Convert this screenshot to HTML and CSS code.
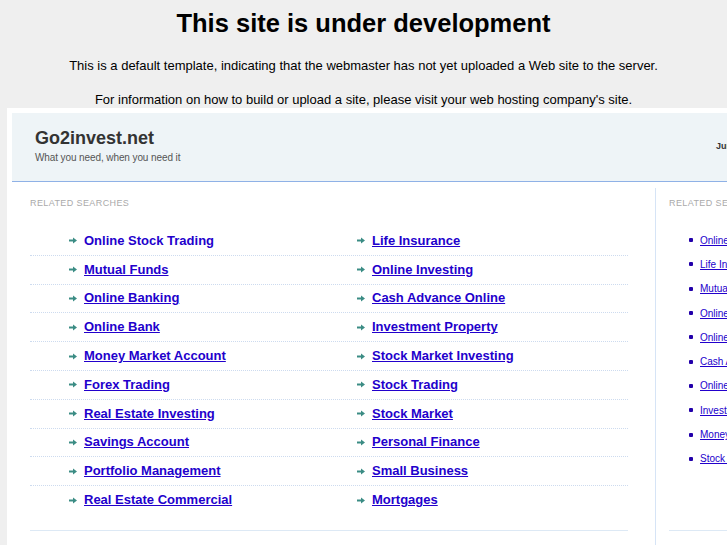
FILE: index.html
```html
<!DOCTYPE html>
<html>
<head>
<meta charset="utf-8">
<title>This site is under development</title>
<link rel="stylesheet" href="styles.css">
</head>
<body>
<h1 class="title">This site is under development</h1>
<p class="intro">This is a default template, indicating that the webmaster has not yet uploaded a Web site to the server.</p>
<p class="intro intro-second">For information on how to build or upload a site, please visit your web hosting company's site.</p>
<div class="frame">
  <div class="site-header">
    <div class="brand">
      <div class="brand-name">Go2invest.net</div>
      <div class="brand-tag">What you need, when you need it</div>
    </div>
    <div class="header-date">June 2011</div>
  </div>
  <div class="main">
    <div class="left-col">
      <div class="label">Related Searches</div>
      <div class="links">
        <div class="row">
          <div class="cell"><svg class="arrow" viewBox="0 0 8 7"><path d="M0 3.5H4.5" stroke="#3b8c84" stroke-width="2"/><path d="M4 0.5L8 3.5L4 6.5Z" fill="#3b8c84"/></svg><a class="link nounder" href="#">Online Stock Trading</a></div>
          <div class="cell"><svg class="arrow" viewBox="0 0 8 7"><path d="M0 3.5H4.5" stroke="#3b8c84" stroke-width="2"/><path d="M4 0.5L8 3.5L4 6.5Z" fill="#3b8c84"/></svg><a class="link" href="#">Life Insurance</a></div>
        </div>
        <div class="row">
          <div class="cell"><svg class="arrow" viewBox="0 0 8 7"><path d="M0 3.5H4.5" stroke="#3b8c84" stroke-width="2"/><path d="M4 0.5L8 3.5L4 6.5Z" fill="#3b8c84"/></svg><a class="link" href="#">Mutual Funds</a></div>
          <div class="cell"><svg class="arrow" viewBox="0 0 8 7"><path d="M0 3.5H4.5" stroke="#3b8c84" stroke-width="2"/><path d="M4 0.5L8 3.5L4 6.5Z" fill="#3b8c84"/></svg><a class="link" href="#">Online Investing</a></div>
        </div>
        <div class="row">
          <div class="cell"><svg class="arrow" viewBox="0 0 8 7"><path d="M0 3.5H4.5" stroke="#3b8c84" stroke-width="2"/><path d="M4 0.5L8 3.5L4 6.5Z" fill="#3b8c84"/></svg><a class="link" href="#">Online Banking</a></div>
          <div class="cell"><svg class="arrow" viewBox="0 0 8 7"><path d="M0 3.5H4.5" stroke="#3b8c84" stroke-width="2"/><path d="M4 0.5L8 3.5L4 6.5Z" fill="#3b8c84"/></svg><a class="link" href="#">Cash Advance Online</a></div>
        </div>
        <div class="row">
          <div class="cell"><svg class="arrow" viewBox="0 0 8 7"><path d="M0 3.5H4.5" stroke="#3b8c84" stroke-width="2"/><path d="M4 0.5L8 3.5L4 6.5Z" fill="#3b8c84"/></svg><a class="link" href="#">Online Bank</a></div>
          <div class="cell"><svg class="arrow" viewBox="0 0 8 7"><path d="M0 3.5H4.5" stroke="#3b8c84" stroke-width="2"/><path d="M4 0.5L8 3.5L4 6.5Z" fill="#3b8c84"/></svg><a class="link" href="#">Investment Property</a></div>
        </div>
        <div class="row">
          <div class="cell"><svg class="arrow" viewBox="0 0 8 7"><path d="M0 3.5H4.5" stroke="#3b8c84" stroke-width="2"/><path d="M4 0.5L8 3.5L4 6.5Z" fill="#3b8c84"/></svg><a class="link" href="#">Money Market Account</a></div>
          <div class="cell"><svg class="arrow" viewBox="0 0 8 7"><path d="M0 3.5H4.5" stroke="#3b8c84" stroke-width="2"/><path d="M4 0.5L8 3.5L4 6.5Z" fill="#3b8c84"/></svg><a class="link" href="#">Stock Market Investing</a></div>
        </div>
        <div class="row">
          <div class="cell"><svg class="arrow" viewBox="0 0 8 7"><path d="M0 3.5H4.5" stroke="#3b8c84" stroke-width="2"/><path d="M4 0.5L8 3.5L4 6.5Z" fill="#3b8c84"/></svg><a class="link" href="#">Forex Trading</a></div>
          <div class="cell"><svg class="arrow" viewBox="0 0 8 7"><path d="M0 3.5H4.5" stroke="#3b8c84" stroke-width="2"/><path d="M4 0.5L8 3.5L4 6.5Z" fill="#3b8c84"/></svg><a class="link" href="#">Stock Trading</a></div>
        </div>
        <div class="row">
          <div class="cell"><svg class="arrow" viewBox="0 0 8 7"><path d="M0 3.5H4.5" stroke="#3b8c84" stroke-width="2"/><path d="M4 0.5L8 3.5L4 6.5Z" fill="#3b8c84"/></svg><a class="link" href="#">Real Estate Investing</a></div>
          <div class="cell"><svg class="arrow" viewBox="0 0 8 7"><path d="M0 3.5H4.5" stroke="#3b8c84" stroke-width="2"/><path d="M4 0.5L8 3.5L4 6.5Z" fill="#3b8c84"/></svg><a class="link" href="#">Stock Market</a></div>
        </div>
        <div class="row">
          <div class="cell"><svg class="arrow" viewBox="0 0 8 7"><path d="M0 3.5H4.5" stroke="#3b8c84" stroke-width="2"/><path d="M4 0.5L8 3.5L4 6.5Z" fill="#3b8c84"/></svg><a class="link" href="#">Savings Account</a></div>
          <div class="cell"><svg class="arrow" viewBox="0 0 8 7"><path d="M0 3.5H4.5" stroke="#3b8c84" stroke-width="2"/><path d="M4 0.5L8 3.5L4 6.5Z" fill="#3b8c84"/></svg><a class="link" href="#">Personal Finance</a></div>
        </div>
        <div class="row">
          <div class="cell"><svg class="arrow" viewBox="0 0 8 7"><path d="M0 3.5H4.5" stroke="#3b8c84" stroke-width="2"/><path d="M4 0.5L8 3.5L4 6.5Z" fill="#3b8c84"/></svg><a class="link" href="#">Portfolio Management</a></div>
          <div class="cell"><svg class="arrow" viewBox="0 0 8 7"><path d="M0 3.5H4.5" stroke="#3b8c84" stroke-width="2"/><path d="M4 0.5L8 3.5L4 6.5Z" fill="#3b8c84"/></svg><a class="link" href="#">Small Business</a></div>
        </div>
        <div class="row">
          <div class="cell"><svg class="arrow" viewBox="0 0 8 7"><path d="M0 3.5H4.5" stroke="#3b8c84" stroke-width="2"/><path d="M4 0.5L8 3.5L4 6.5Z" fill="#3b8c84"/></svg><a class="link" href="#">Real Estate Commercial</a></div>
          <div class="cell"><svg class="arrow" viewBox="0 0 8 7"><path d="M0 3.5H4.5" stroke="#3b8c84" stroke-width="2"/><path d="M4 0.5L8 3.5L4 6.5Z" fill="#3b8c84"/></svg><a class="link" href="#">Mortgages</a></div>
        </div>
      </div>
    </div>
    <div class="right-col">
      <div class="label">Related Searches</div>
      <ul class="side-links">
        <li><a href="#">Online Stock Trading</a></li>
        <li><a href="#">Life Insurance</a></li>
        <li><a href="#">Mutual Funds</a></li>
        <li><a href="#">Online Investing</a></li>
        <li><a href="#">Online Banking</a></li>
        <li><a href="#">Cash Advance Online</a></li>
        <li><a href="#">Online Bank</a></li>
        <li><a href="#">Investment Property</a></li>
        <li><a href="#">Money Market Account</a></li>
        <li><a href="#">Stock Market Investing</a></li>
      </ul>
    </div>
  </div>
</div>
</body>
</html>
```

FILE: styles.css
```css
html, body {
  margin: 0;
  padding: 0;
}
body {
  background: #efefef;
  font-family: "Liberation Sans", Arial, sans-serif;
  color: #000;
  overflow: hidden;
  height: 545px;
}
.title {
  margin: 8px 0 0;
  font-size: 25.5px;
  line-height: 30px;
  font-weight: bold;
  text-align: center;
}
.intro {
  margin: 20px 0 0;
  font-size: 13px;
  line-height: 15px;
  text-align: center;
}
.intro-second {
  margin-top: 19px;
}
.frame {
  margin: 1px 0 0 7px;
  width: 900px;
  height: 460px;
  background: #fff;
  padding: 5px 0 0 5px;
}
.site-header {
  display: flex;
  background: #eef4f7;
  border-bottom: 1px solid #8fb1e6;
  padding-left: 23px;
  box-sizing: border-box;
  height: 69px;
}
.brand {
  width: 681px;
  padding-top: 14px;
}
.brand-name {
  font-size: 18px;
  line-height: 22px;
  font-weight: bold;
  color: #333;
}
.brand-tag {
  margin-top: 3px;
  font-size: 10px;
  line-height: 12px;
  color: #555;
  letter-spacing: -0.1px;
}
.header-date {
  padding-top: 28px;
  font-size: 9px;
  line-height: 11px;
  font-weight: bold;
  color: #333;
  white-space: nowrap;
}
.main {
  display: flex;
  padding: 6px 0 0 18px;
}
.left-col {
  width: 598px;
  padding-top: 10px;
}
.label {
  font-size: 9px;
  line-height: 11px;
  color: #aaa;
  text-transform: uppercase;
  letter-spacing: 0.4px;
}
.links {
  margin-top: 18px;
  padding-bottom: 16px;
  border-bottom: 1px solid #dde9f5;
}
.row {
  display: grid;
  grid-template-columns: 288px 1fr;
  height: 27.8px;
  border-bottom: 1px dotted #cddbef;
}
.row:last-child {
  border-bottom: none;
}
.cell {
  display: flex;
  align-items: center;
  padding-left: 39px;
}
.arrow {
  width: 8px;
  height: 7px;
  margin-right: 7px;
  flex: none;
}
.link {
  font-size: 13px;
  font-weight: bold;
  color: #2200cc;
  text-decoration: underline;
  line-height: 16px;
}
.nounder {
  text-decoration: none;
}
.right-col {
  margin-left: 27px;
  border-left: 1px solid #d6e4f6;
  padding: 10px 0 0 13px;
  width: 220px;
  height: 400px;
}
.side-links {
  list-style: none;
  margin: 19px 0 0;
  padding: 0 0 59px;
  border-bottom: 1px solid #dde9f5;
}
.side-links li {
  display: flex;
  align-items: center;
  height: 24.3px;
  padding-left: 20px;
}
.side-links li::before {
  content: "";
  width: 4px;
  height: 4px;
  border-radius: 1px;
  background: #2200aa;
  margin-right: 7px;
  flex: none;
}
.side-links a {
  font-size: 10px;
  color: #2200cc;
  text-decoration: underline;
  white-space: nowrap;
}
```
